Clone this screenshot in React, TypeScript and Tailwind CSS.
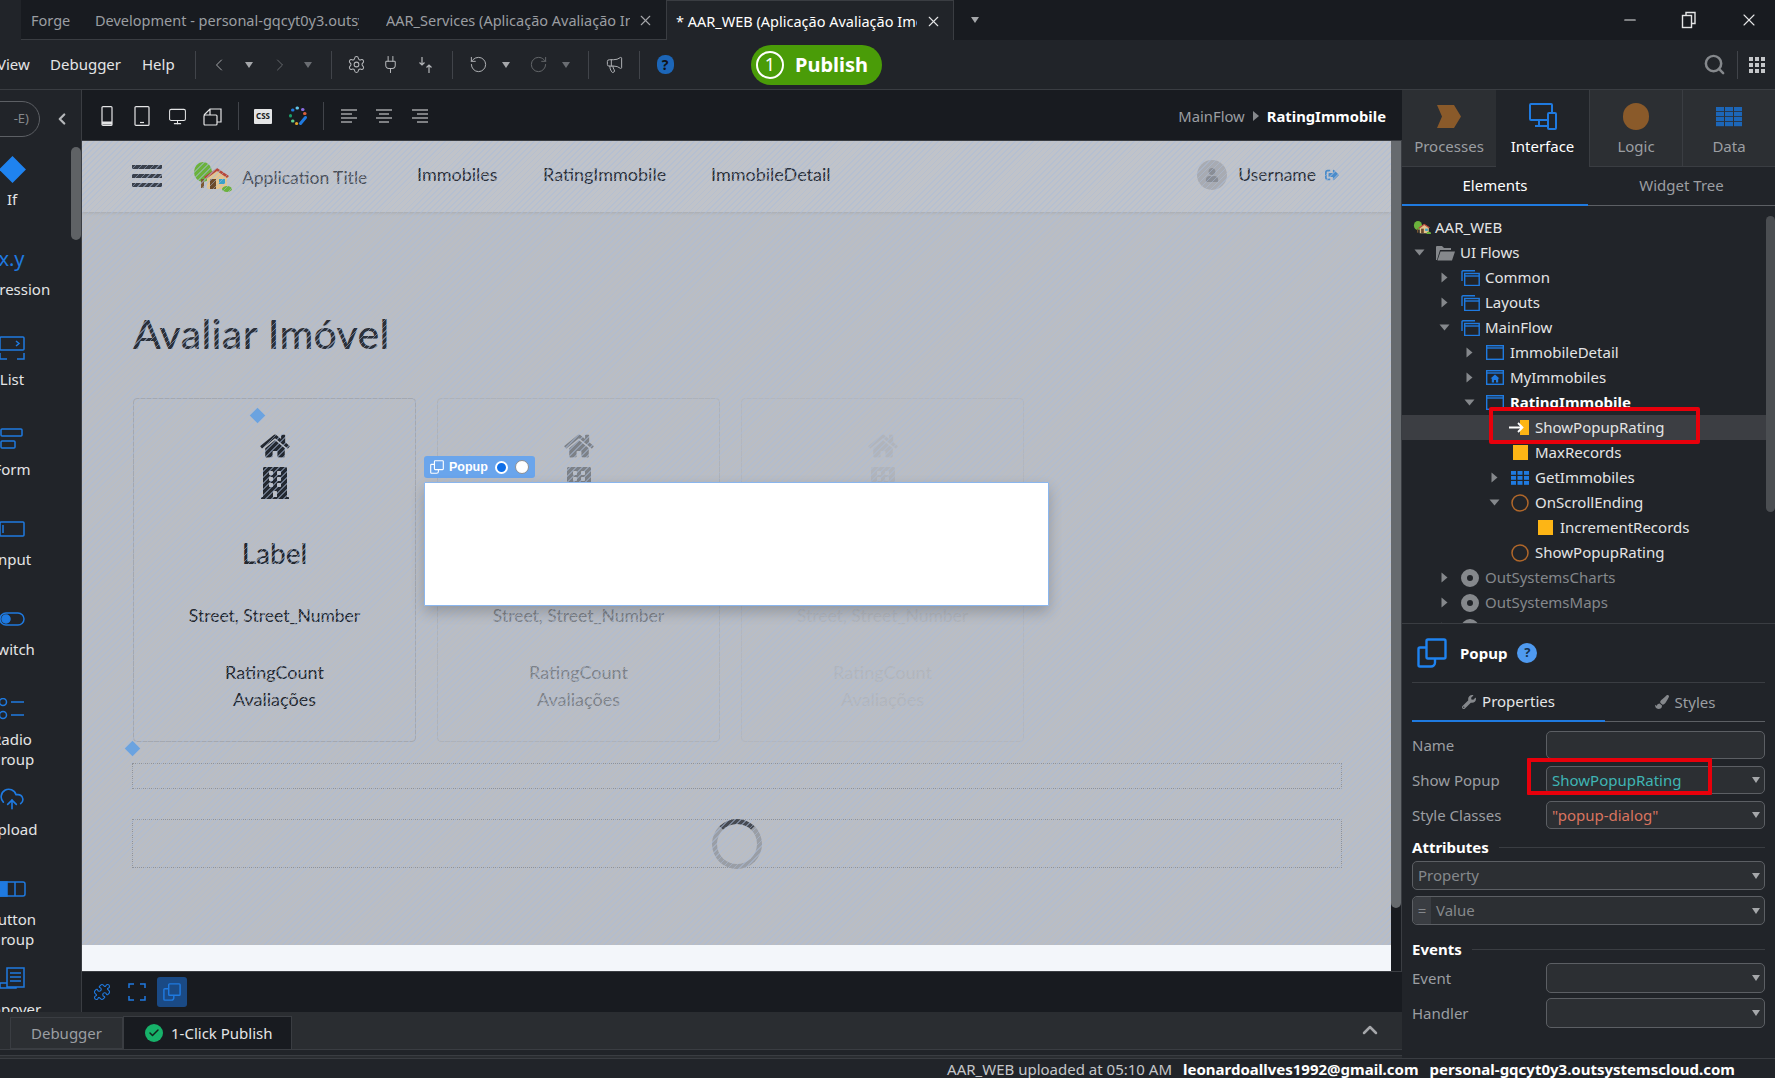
import React from "react";
import {
  ChevronLeft,
  ChevronRight,
  Search,
  Plug,
  Settings,
  RotateCcw,
  RotateCw,
  Megaphone,
  Monitor,
  Puzzle,
  X,
  Check,
  ChevronUp,
  Minus,
  CloudUpload,
} from "lucide-react";
import { FaHome, FaBuilding, FaWrench, FaPaintBrush, FaUser, FaSignOutAlt } from "react-icons/fa";

const Caret = ({ dim, className = "" }: { dim?: boolean; className?: string }) => (
  <svg width="10" height="8" viewBox="0 0 10 8" className={`${dim ? "text-[#6a6d72]" : "text-[#a5a7aa]"} ${className}`}>
    <path d="M1 1h8L5 7z" fill="currentColor" />
  </svg>
);

const Sep = ({ className }: { className: string }) => <div className={`h-7 w-px bg-[#41444a] ${className}`} />;

const Slot = ({ className, children }: { className: string; children: React.ReactNode }) => (
  <div className={`flex h-6 w-5 shrink-0 items-center justify-center ${className}`}>{children}</div>
);

const Logo = ({ size }: { size: number }) => (
  <svg width={size} height={size * 0.75} viewBox="0 0 40 30">
    <ellipse cx="11" cy="10" rx="9" ry="10" fill="#6bb23c" />
    <rect x="9" y="17" width="3" height="9" fill="#7c5a34" />
    <path d="M13 15 L25 7 L37 15 L35 16 L35 27 L15 27 L15 16z" fill="#e3c48f" />
    <path d="M12 15 L25 6 L37 14 L35 16 L25 9 L14 17z" fill="#b8473a" />
    <rect x="18" y="17" width="6" height="10" fill="#6b4a2b" />
    <rect x="27" y="17" width="6" height="5" fill="#3aa1c9" />
    <ellipse cx="35" cy="27" rx="5" ry="3" fill="#6bb23c" />
  </svg>
);

const PopupGlyph = ({ className, size = 18 }: { className: string; size?: number }) => (
  <svg width={size} height={size} viewBox="0 0 30 30" fill="none" stroke="currentColor" strokeWidth="2.4" className={className}>
    <rect x="9.5" y="1.5" width="19" height="19" rx="1.5" />
    <path d="M9.5 9.5H3a1.5 1.5 0 0 0-1.5 1.5v16A1.5 1.5 0 0 0 3 28.500h11a4 4 0 0 0 4-4v-4" />
  </svg>
);

const FlowIcon = () => (
  <svg width="19" height="16" viewBox="0 0 19 16" fill="none" stroke="#1f7ae0" strokeWidth="1.4">
    <path d="M1 11V1.700a1 1 0 0 1 1-1h12" />
    <rect x="3.700" y="3.500" width="14.500" height="12" />
    <path d="M3.700 6h14.500" />
  </svg>
);

const ScreenIcon = ({ home }: { home?: boolean }) => (
  <svg width="18" height="15" viewBox="0 0 18 15" fill="none" stroke="#1f7ae0" strokeWidth="1.4">
    <rect x="0.700" y="0.700" width="16.600" height="13.600" />
    <path d="M0.700 3h16.600" />
    {home && <path d="M9 4.500l4.500 4h-1.300v4H10V10H8v2.500H5.800v-4H4.500z" fill="#1f7ae0" stroke="none" />}
  </svg>
);

const OrangeCircle = () => (
  <svg width="18" height="18" viewBox="0 0 18 18" fill="none" stroke="#b0672a" strokeWidth="1.500">
    <circle cx="9" cy="9" r="8" />
  </svg>
);

const ModuleIcon = () => (
  <svg width="18" height="18" viewBox="0 0 18 18">
    <circle cx="9" cy="9" r="6" fill="none" stroke="#85888c" strokeWidth="6" />
  </svg>
);

const AggIcon = () => (
  <svg width="18" height="14" viewBox="0 0 18 14" fill="#1f7ae0">
    {[0, 5, 10].map((y) =>
      [0, 6.500, 13].map((x) => <rect key={`${x}-${y}`} x={x} y={y} width="5" height="3.800" />)
    )}
  </svg>
);

const treeIndent = ["pl-[10px]", "pl-[35px]", "pl-[60px]", "pl-[85px]", "pl-[110px]"];

const TreeRow = ({
  level,
  arrow,
  icon,
  text,
  bold,
  dim,
  selected,
}: {
  level: number;
  arrow?: "r" | "d";
  icon: React.ReactNode;
  text: string;
  bold?: boolean;
  dim?: boolean;
  selected?: boolean;
}) => (
  <div className={`flex h-[25px] items-center ${treeIndent[level]} ${selected ? "bg-[#3c3e43]" : ""}`}>
    <div className="flex w-[14px] justify-center">
      {arrow === "r" && (
        <svg width="7" height="11" viewBox="0 0 7 11">
          <path d="M0.500 0.500L6.500 5.500L0.500 10.500z" fill="#85888c" />
        </svg>
      )}
      {arrow === "d" && (
        <svg width="11" height="7" viewBox="0 0 11 7">
          <path d="M0.500 0.500H10.500L5.500 6.500z" fill="#85888c" />
        </svg>
      )}
    </div>
    <div className="ml-[8px] flex w-[22px] justify-center">{icon}</div>
    <span
      className={`ml-[4px] text-[15px] whitespace-nowrap ${bold ? "font-bold text-white" : dim ? "text-[#85888c]" : "text-[#e4e5e6]"}`}
    >
      {text}
    </span>
  </div>
);

const Square = () => <div className="h-[15px] w-[15px] bg-[#fdb515]" />;

const Box = ({ className, caret = true, children }: { className: string; caret?: boolean; children?: React.ReactNode }) => (
  <div className={`flex items-center rounded-[5px] border border-[#5c5f64] bg-[#2c2f33] pr-[3px] pl-[5px] ${className}`}>
    {children}
    {caret && <Caret className="ml-auto" />}
  </div>
);

const Field = ({
  label,
  text,
  color,
  caret = true,
  className,
}: {
  label: string;
  text?: string;
  color?: string;
  caret?: boolean;
  className: string;
}) => (
  <div className={`flex items-center ${className}`}>
    <span className="w-[134px] text-[15px] text-[#9b9ea2]">{label}</span>
    <Box className="h-[28px] flex-1" caret={caret}>
      {text && <span className={`text-[15px] ${color}`}>{text}</span>}
    </Box>
  </div>
);

const PaletteItem = ({ icon, lines }: { icon: React.ReactNode; lines: string[] }) => (
  <div className="flex h-[90px] w-[100px] flex-col items-center">
    <div className="flex h-8 items-center justify-center">{icon}</div>
    <div className="mt-1 text-center text-[15px] leading-[20px] text-[#e4e5e6]">
      {lines.map((l) => (
        <div key={l}>{l}</div>
      ))}
    </div>
  </div>
);

const Card = ({ className, border }: { className: string; border: string }) => (
  <div className={`h-[344px] w-[283px] rounded-[4px] border ${border}`}>
    <div className={`flex flex-col items-center pt-[34px] font-['Lato',sans-serif] text-[#232830] ${className}`}>
      <FaHome className="h-[26px] w-[32px]" />
      <FaBuilding className="mt-[7px] h-[34px] w-[28px]" />
      <div className="mt-[35px] text-[28px] leading-[36px] font-medium">Label</div>
      <div className="mt-[32px] text-[17.500px] leading-[26px]">Street, Street_Number</div>
      <div className="mt-[30px] text-[18px] leading-[27px]">RatingCount</div>
      <div className="text-[18px] leading-[27px]">Avaliações</div>
    </div>
  </div>
);

const App = () => {
  return (
    <div className="flex h-[1078px] w-[1775px] flex-col overflow-hidden bg-[#181b20] font-['Noto_Sans',sans-serif] text-[15px]">
      {/* title bar */}
      <div className="flex h-[40px] shrink-0 items-stretch bg-[#181b20] text-[14.500px] text-[#9b9ea2]">
        <div className="w-[21px] bg-[#212429]" />
        <div className="flex w-[645px] items-center border-b border-[#3a3d42] pt-[2px]">
          <span className="ml-[10px] w-[64px]">Forge</span>
          <span className="w-[264px] overflow-hidden whitespace-nowrap">Development - personal-gqcyt0y3.outsystemscloud.com</span>
          <span className="ml-[27px] w-[244px] overflow-hidden whitespace-nowrap">AAR_Services (Aplicação Avaliação Imóveis)</span>
          <X className="ml-[7px] h-[17px] w-[17px] text-[#a5a7aa]" strokeWidth={1.500} />
        </div>
        <div className="flex w-[288px] items-center border-t border-r border-l border-[#3a3d42] bg-[#212429] pt-[2px] pl-[9px] text-white">
          <span className="w-[241px] overflow-hidden whitespace-nowrap">* AAR_WEB (Aplicação Avaliação Imóveis)</span>
          <X className="ml-[8px] h-[17px] w-[17px] text-[#e4e5e6]" strokeWidth={1.500} />
        </div>
        <div className="ml-[16px] flex items-center">
          <Caret />
        </div>
        <div className="ml-auto flex items-center text-[#e4e5e6]">
          <Minus className="h-[18px] w-[18px]" strokeWidth={1.500} />
          <svg width="16" height="18" viewBox="0 0 16 18" fill="none" stroke="currentColor" strokeWidth="1.400" className="ml-[42px]">
            <rect x="1.500" y="4.500" width="9" height="12" />
            <path d="M5 4.500V1.500h9v11h-3.500" />
          </svg>
          <X className="mr-[16px] ml-[42px] h-[20px] w-[20px]" strokeWidth={1.300} />
        </div>
      </div>

      {/* main toolbar */}
      <div className="flex h-[50px] shrink-0 items-center border-b border-[#3a3d42] bg-[#212429] text-[#e4e5e6]">
        <span className="-ml-[3px] w-[33px]">View</span>
        <span className="ml-[20px] w-[71px]">Debugger</span>
        <span className="ml-[21px] w-[31px]">Help</span>
        <Sep className="ml-[22px]" />
        <Slot className="ml-[13px]">
          <ChevronLeft className="h-[20px] w-[20px] text-[#a5a7aa]" strokeWidth={1.200} />
        </Slot>
        <Slot className="ml-[10px]">
          <Caret />
        </Slot>
        <Slot className="ml-[11px]">
          <ChevronRight className="h-[20px] w-[20px] text-[#66696d]" strokeWidth={1.200} />
        </Slot>
        <Slot className="ml-[8px]">
          <Caret dim />
        </Slot>
        <Sep className="ml-[13px]" />
        <Slot className="ml-[14px]">
          <Settings className="h-[19px] w-[19px] text-[#b5b7ba]" strokeWidth={1.300} />
        </Slot>
        <Slot className="ml-[14px]">
          <Plug className="h-[19px] w-[19px] text-[#b5b7ba]" strokeWidth={1.300} />
        </Slot>
        <Slot className="ml-[16px]">
          <svg width="18" height="18" viewBox="0 0 18 18" fill="none" stroke="#b5b7ba" strokeWidth="1.200">
            <path d="M5 1v8M2.500 6.500L5 9l2.500-2.500M12 17V9M9.500 11.500L12 9l2.500 2.500" />
          </svg>
        </Slot>
        <Sep className="ml-[16px]" />
        <Slot className="ml-[15px]">
          <RotateCcw className="h-[19px] w-[19px] text-[#b5b7ba]" strokeWidth={1.200} />
        </Slot>
        <Slot className="ml-[8px]">
          <Caret />
        </Slot>
        <Slot className="ml-[12px]">
          <RotateCw className="h-[19px] w-[19px] text-[#66696d]" strokeWidth={1.200} />
        </Slot>
        <Slot className="ml-[8px]">
          <Caret dim />
        </Slot>
        <Sep className="ml-[12px]" />
        <Slot className="ml-[15px]">
          <Megaphone className="h-[19px] w-[19px] text-[#b5b7ba]" strokeWidth={1.200} />
        </Slot>
        <Sep className="ml-[15px]" />
        <Slot className="ml-[15px]">
          <div className="flex h-[19px] w-[17px] items-center justify-center rounded-[8px] bg-[#1c66b8] text-[14px] font-bold text-[#101317]">?</div>
        </Slot>
        <div className="ml-[76px] flex h-[40px] w-[131px] items-center rounded-full bg-[#4a9c08] pl-[5px] text-[20px] font-bold text-white">
          <div className="flex h-[28px] w-[28px] items-center justify-center rounded-full border-2 border-white text-[18px] font-normal">1</div>
          <span className="ml-[11px]">Publish</span>
        </div>
        <div className="ml-auto flex items-center">
          <Search className="h-[23px] w-[23px] text-[#85888c]" strokeWidth={2.600} />
          <div className="mr-[11px] ml-[11px] h-7 w-px bg-[#41444a]" />
          <div className="mr-[10px] grid grid-cols-3 gap-[2px]">
            {Array.from({ length: 9 }).map((_, i) => (
              <div key={i} className="h-[4px] w-[4px] bg-[#c5c7ca]" />
            ))}
          </div>
        </div>
      </div>

      {/* body */}
      <div className="flex h-[968px] shrink-0">
        <div className="flex w-[1402px] flex-col">
          <div className="flex h-[922px]">
            {/* palette */}
            <div className="flex w-[82px] shrink-0 overflow-hidden border-r border-[#3a3d42] bg-[#212429]">
              <div className="w-[71px] overflow-hidden">
                <div className="mt-[10px] flex h-[37px] items-center">
                  <div className="-ml-[30px] flex h-[36px] w-[70px] items-center justify-end rounded-full border border-[#5c5f64] pr-[10px] text-[13px] text-[#85888c]">
                    -E)
                  </div>
                  <ChevronLeft className="ml-[13px] h-[18px] w-[18px] text-[#b5b7ba]" strokeWidth={3} />
                </div>
                <div className="-ml-[38px] pt-[16px]">
                  <PaletteItem
                    icon={
                      <div className="flex h-[32px] items-center">
                        <div className="h-[19px] w-[19px] rotate-45 bg-[#1f83f0]" />
                      </div>
                    }
                    lines={["If"]}
                  />
                  <PaletteItem
                    icon={<span className="-ml-[1px] text-[20px] text-[#1f7ae0]">x.y</span>}
                    lines={["Expression"]}
                  />
                  <PaletteItem
                    icon={
                      <svg width="26" height="26" viewBox="0 0 26 26" fill="none" stroke="#1f7ae0" strokeWidth="1.500">
                        <rect x="1" y="1" width="24" height="13" rx="1" />
                        <path d="M17 5l3 2.500-3 2.500M1 17v6h7M25 17v6h-7" />
                      </svg>
                    }
                    lines={["List"]}
                  />
                  <PaletteItem
                    icon={
                      <svg width="24" height="24" viewBox="0 0 24 24" fill="none" stroke="#1f7ae0" strokeWidth="1.500">
                        <rect x="1" y="2" width="21" height="7" rx="1" />
                        <rect x="1" y="14" width="14" height="7" rx="1" />
                      </svg>
                    }
                    lines={["Form"]}
                  />
                  <PaletteItem
                    icon={
                      <svg width="26" height="16" viewBox="0 0 26 16" fill="none" stroke="#1f7ae0" strokeWidth="1.500">
                        <rect x="1" y="1" width="24" height="14" rx="1" />
                        <path d="M4 4v8" />
                      </svg>
                    }
                    lines={["Input"]}
                  />
                  <PaletteItem
                    icon={
                      <svg width="26" height="14" viewBox="0 0 26 14" fill="none" stroke="#1f7ae0" strokeWidth="1.500">
                        <rect x="1" y="1" width="24" height="12" rx="6" />
                        <circle cx="7" cy="7" r="4" fill="#1f7ae0" />
                      </svg>
                    }
                    lines={["Switch"]}
                  />
                  <PaletteItem
                    icon={
                      <svg width="26" height="22" viewBox="0 0 26 22" fill="none" stroke="#1f7ae0" strokeWidth="1.500">
                        <circle cx="4" cy="4" r="3.500" />
                        <circle cx="4" cy="17" r="3.500" />
                        <path d="M12 4h13M12 17h13" />
                      </svg>
                    }
                    lines={["Radio", "Group"]}
                  />
                  <PaletteItem icon={<CloudUpload className="h-[26px] w-[26px] text-[#1f7ae0]" strokeWidth={1.500} />} lines={["Upload"]} />
                  <PaletteItem
                    icon={
                      <svg width="28" height="16" viewBox="0 0 28 16" fill="none" stroke="#1f7ae0" strokeWidth="1.500">
                        <rect x="1" y="1" width="26" height="14" rx="2" />
                        <rect x="1" y="1" width="8" height="14" fill="#1f7ae0" />
                        <path d="M17 1v14" />
                      </svg>
                    }
                    lines={["Button", "Group"]}
                  />
                  <PaletteItem
                    icon={
                      <svg width="26" height="24" viewBox="0 0 26 24" fill="none" stroke="#1f7ae0" strokeWidth="1.500">
                        <rect x="8" y="1" width="17" height="19" />
                        <path d="M11 6h11M11 10h11M11 14h11M8 16H1v5h16v-1" />
                      </svg>
                    }
                    lines={["Popover"]}
                  />
                </div>
              </div>
              <div className="mt-[57px] h-[93px] w-[10px] rounded-full bg-[#5f6265]" />
            </div>

            {/* center */}
            <div className="flex w-[1320px] flex-col">
              <div className="flex h-[51px] shrink-0 items-center border-b border-[#3a3d42] bg-[#181b20] pt-[2px] text-[#e4e5e6]">
                <Slot className="ml-[15px]">
                  <svg width="12" height="20" viewBox="0 0 12 20" fill="none" stroke="currentColor" strokeWidth="1.200">
                    <rect x="1" y="0.600" width="10" height="18.800" rx="1" />
                    <path d="M1 17h10" strokeWidth="3" />
                  </svg>
                </Slot>
                <Slot className="ml-[15px]">
                  <svg width="16" height="20" viewBox="0 0 16 20" fill="none" stroke="currentColor" strokeWidth="1.200">
                    <rect x="1" y="0.600" width="14" height="18.800" rx="1" />
                    <path d="M6 16.500h4" />
                  </svg>
                </Slot>
                <Slot className="ml-[15px]">
                  <Monitor className="h-[19px] w-[19px]" strokeWidth={1.300} />
                </Slot>
                <Slot className="ml-[15px]">
                  <svg width="19" height="19" viewBox="0 0 19 19" fill="none" stroke="currentColor" strokeWidth="1.200">
                    <rect x="1" y="8" width="13" height="10" rx="1" />
                    <path d="M1 8l6-6h11v13h-4M7 2v6" />
                  </svg>
                </Slot>
                <Sep className="ml-[16px]" />
                <Slot className="ml-[14px]">
                  <div className="flex h-[15px] w-[18px] items-center justify-center rounded-[1px] bg-[#e4e5e6] text-[8px] font-bold text-[#181b20]">CSS</div>
                </Slot>
                <Slot className="ml-[15px]">
                  <svg width="20" height="20" viewBox="0 0 20 20" fill="none" strokeWidth="3" strokeLinecap="round">
                    <path d="M9 2h.5" stroke="#62c6ea" />
                    <path d="M14.500 3.500h.5" stroke="#8a6be0" />
                    <path d="M4.500 4h.5" stroke="#1f7ae0" />
                    <path d="M2.500 9.500v.5" stroke="#1a9e6a" />
                    <path d="M4.500 15h.5" stroke="#5fd08f" />
                    <path d="M8.500 17.500h.2" stroke="#e0a52a" />
                    <path d="M12.500 17.500l5-6" stroke="#1f7ae0" />
                    <path d="M16.500 7.500h.5" stroke="#d9603a" />
                  </svg>
                </Slot>
                <Sep className="ml-[15px]" />
                <Slot className="ml-[15px]">
                  <svg width="16" height="14" viewBox="0 0 16 14" fill="none" stroke="currentColor" strokeWidth="1.200">
                    <path d="M0 1h16M0 5h11M0 9h16M0 13h11" />
                  </svg>
                </Slot>
                <Slot className="ml-[15px]">
                  <svg width="16" height="14" viewBox="0 0 16 14" fill="none" stroke="currentColor" strokeWidth="1.200">
                    <path d="M0 1h16M3 5h10M0 9h16M3 13h10" />
                  </svg>
                </Slot>
                <Slot className="ml-[16px]">
                  <svg width="16" height="14" viewBox="0 0 16 14" fill="none" stroke="currentColor" strokeWidth="1.200">
                    <path d="M0 1h16M5 5h11M0 9h16M5 13h11" />
                  </svg>
                </Slot>
                <div className="mr-[16px] ml-auto flex items-center text-[14.800px]">
                  <span className="text-[#9b9ea2]">MainFlow</span>
                  <svg width="6" height="10" viewBox="0 0 6 10" className="mx-[8px]">
                    <path d="M0 0l6 5-6 5z" fill="#85888c" />
                  </svg>
                  <span className="font-bold text-white">RatingImmobile</span>
                </div>
              </div>

              <div className="flex h-[830px]">
                <div className="relative w-[1309px] shrink-0 bg-[#f3f6fa]">
                  <div className="relative h-[804px] overflow-hidden bg-[#babdc3] font-['Lato',sans-serif] text-[#2b3039]">
                    <div className="flex h-[71px] items-center bg-[#c0c3c9] text-[18px] shadow-[0_1px_3px_rgba(0,0,0,0.1)]">
                      <div className="mb-[2px] ml-[50px] flex flex-col gap-[5px]">
                        <div className="h-[4px] w-[30px] bg-[#3b414c]" />
                        <div className="h-[4px] w-[30px] bg-[#3b414c]" />
                        <div className="h-[4px] w-[30px] bg-[#3b414c]" />
                      </div>
                      <div className="ml-[30px]">
                        <Logo size={40} />
                      </div>
                      <span className="mt-[3px] ml-[10px] w-[125px] text-[17.500px] whitespace-nowrap text-[#4a4f58]">Application Title</span>
                      <div className="mb-[4px] flex items-center">
                        <span className="ml-[50px] w-[81px]">Immobiles</span>
                        <span className="ml-[45px] w-[123px]">RatingImmobile</span>
                        <span className="ml-[45px] w-[118px]">ImmobileDetail</span>
                      </div>
                      <div className="mb-[3px] ml-auto flex items-center pr-[52px]">
                        <div className="flex h-[30px] w-[30px] items-center justify-center rounded-full bg-[#a8abb2]">
                          <FaUser className="h-[14px] w-[14px] text-[#898d95]" />
                        </div>
                        <span className="ml-[11px] text-[17.500px]">Username</span>
                        <FaSignOutAlt className="ml-[9px] h-[14px] w-[14px] text-[#4a8cca]" />
                      </div>
                    </div>
                    <div className="pl-[51px]">
                      <h1 className="pt-[100px] pb-[1px] text-[41px] leading-[44px] font-medium tracking-[0.3px]">Avaliar Imóvel</h1>
                      <div className="mt-[41px] flex gap-[21px]">
                        <Card className="" border="border-[#a4a8b0]" />
                        <Card className="opacity-40" border="border-[#aeb2b9]" />
                        <Card className="opacity-5" border="border-[#b3b6bd]" />
                      </div>
                      <div className="mt-[21px] -ml-px h-[26px] w-[1210px] border border-dotted border-[#8f9299]" />
                      <div className="mt-[30px] -ml-px flex h-[49px] w-[1210px] items-center justify-center border border-dotted border-[#8f9299]">
                        <div className="h-[50px] w-[50px] rounded-full border-[5px] border-[#9a9ea5] border-t-[#464a52]" />
                      </div>
                    </div>
                    {/* stripes over the dimmed page */}
                    <div className="absolute inset-0 bg-[repeating-linear-gradient(135deg,rgba(170,188,218,0.5)_0px,rgba(170,188,218,0.5)_1.200px,transparent_1.200px,transparent_4.200px)]" />
                    <div className="absolute top-[602px] left-[45px] h-[11px] w-[11px] rotate-45 bg-[#6ba3e0]" />
                    <div className="absolute top-[269px] left-[170px] h-[11px] w-[11px] rotate-45 bg-[#6ba3e0]" />
                  </div>
                  {/* popup widget */}
                  <div className="absolute top-[315px] left-[342px] flex h-[22px] w-[111px] items-center rounded-[3px] bg-[#6aa5ec] pl-[6px] font-['Liberation_Sans',sans-serif] text-[12.500px] font-bold text-white">
                    <PopupGlyph className="text-white" size={14} />
                    <span className="ml-[5px]">Popup</span>
                    <div className="ml-[7px] h-[13px] w-[13px] rounded-full border-2 border-white bg-[#0f6fe8]" />
                    <div className="ml-[7px] h-[14px] w-[14px] rounded-full border border-[#8c8f94] bg-white" />
                  </div>
                  <div className="absolute top-[341px] left-[342px] h-[124px] w-[625px] rounded-[1px] border border-[#8ab6ee] bg-white shadow-[0_6px_14px_rgba(0,0,0,0.2)]" />
                </div>
                <div className="flex w-[10px] shrink-0 flex-col bg-[#181b20]">
                  <div className="h-[767px] rounded-b-full bg-[#666a6e]" />
                </div>
                <div className="w-px bg-[#3a3d42]" />
              </div>

              <div className="flex h-[41px] shrink-0 items-center border-t border-[#3a3d42] bg-[#181b20] text-[#1f7ae0]">
                <Puzzle className="ml-[11px] h-[18px] w-[18px]" strokeWidth={1.500} />
                <svg width="18" height="18" viewBox="0 0 18 18" fill="none" stroke="currentColor" strokeWidth="1.500" className="ml-[17px]">
                  <path d="M1 5V1h5M12 1h5v4M17 13v4h-5M6 17H1v-4" />
                </svg>
                <div className="ml-[11px] flex h-[30px] w-[30px] items-center justify-center rounded-[3px] bg-[#1a4a85]">
                  <PopupGlyph className="text-[#1f7ae0]" />
                </div>
              </div>
            </div>
          </div>

          {/* bottom tabs */}
          <div className="flex h-[46px] shrink-0 flex-col bg-[#2a2d31]">
            <div className="flex h-[38px] items-end border-b border-[#3a3d42] pl-[10px]">
              <div className="flex h-[32px] w-[113px] items-center justify-center border border-[#3a3d42] bg-[#2c2f33] text-[#9b9ea2]">Debugger</div>
              <div className="flex h-[33px] w-[169px] items-center border border-b-0 border-[#3a3d42] bg-[#181b20] pl-[21px] text-[#e4e5e6]">
                <div className="flex h-[18px] w-[18px] items-center justify-center rounded-full bg-[#17b26a]">
                  <Check className="h-[12px] w-[12px] text-[#12241c]" strokeWidth={3} />
                </div>
                <span className="ml-[8px]">1-Click Publish</span>
              </div>
              <ChevronUp className="mr-[20px] mb-[1px] ml-auto h-[24px] w-[24px] self-center text-[#a5a7aa]" strokeWidth={2.500} />
            </div>
            <div className="h-[6px] border-b border-[#3a3d42] bg-[#212429]" />
          </div>
        </div>

        {/* right panel */}
        <div className="flex w-[373px] flex-col bg-[#212429]">
          <div className="flex h-[77px] shrink-0 text-[15px] text-[#9b9ea2]">
            <div className="flex w-[94px] flex-col items-center border-b border-[#3a3d42] bg-[#2c2f33] pt-[13px]">
              <div className="flex h-[27px] items-center">
                <svg width="26" height="23" viewBox="0 0 26 23">
                  <path d="M1 0h17l7 11.500-7 11.500H1l5-11.500z" fill="#8a5a2a" />
                </svg>
              </div>
              <span className="mt-[5px]">Processes</span>
            </div>
            <div className="flex w-[93px] flex-col items-center pt-[13px] text-white">
              <svg width="28" height="27" viewBox="0 0 28 27" fill="none" stroke="#1f7ae0" strokeWidth="2">
                <path d="M18 17H2a1 1 0 0 1-1-1V2a1 1 0 0 1 1-1h20a1 1 0 0 1 1 1v7" />
                <path d="M10 17v5M6 23h12" />
                <rect x="19" y="10" width="8" height="16" rx="1" />
              </svg>
              <span className="mt-[5px]">Interface</span>
            </div>
            <div className="flex w-[93px] flex-col items-center border-b border-l border-[#3a3d42] bg-[#2c2f33] pt-[13px]">
              <div className="h-[27px] w-[26px] rounded-full bg-[#8a5a2a]" />
              <span className="mt-[5px]">Logic</span>
            </div>
            <div className="flex w-[93px] flex-col items-center border-b border-l border-[#3a3d42] bg-[#2c2f33] pt-[13px]">
              <div className="flex h-[27px] items-center">
                <svg width="26" height="20" viewBox="0 0 26 20" fill="#1c66b8">
                  {[0, 5, 10, 15].map((y) =>
                    [0, 9, 18].map((x) => <rect key={`${x}-${y}`} x={x} y={y} width="8" height="4.200" />)
                  )}
                </svg>
              </div>
              <span className="mt-[5px]">Data</span>
            </div>
          </div>
          <div className="flex h-[39px] shrink-0 text-center leading-[36px]">
            <div className="w-[186px] border-b-2 border-[#1f7ae0] text-white">Elements</div>
            <div className="flex-1 border-b border-[#5c5f64] text-[#9b9ea2]">Widget Tree</div>
          </div>

          {/* tree */}
          <div className="relative flex h-[418px] shrink-0 overflow-hidden border-b border-[#3a3d42]">
            <div className="w-[364px] pt-[9px]">
              <div className="flex h-[25px] items-center pl-[9px]">
                <div className="flex w-[22px] justify-center">
                  <Logo size={18} />
                </div>
                <span className="ml-[2px] text-[#e4e5e6]">AAR_WEB</span>
              </div>
              <TreeRow
                level={0}
                arrow="d"
                text="UI Flows"
                icon={
                  <svg width="19" height="16" viewBox="0 0 19 16" fill="#85888c">
                    <path d="M0 15V2a1 1 0 0 1 1-1h5l2 2h7v2H4L1 15zM4.500 6.500H19l-3 9H1.500z" />
                  </svg>
                }
              />
              <TreeRow level={1} arrow="r" text="Common" icon={<FlowIcon />} />
              <TreeRow level={1} arrow="r" text="Layouts" icon={<FlowIcon />} />
              <TreeRow level={1} arrow="d" text="MainFlow" icon={<FlowIcon />} />
              <TreeRow level={2} arrow="r" text="ImmobileDetail" icon={<ScreenIcon />} />
              <TreeRow level={2} arrow="r" text="MyImmobiles" icon={<ScreenIcon home />} />
              <TreeRow level={2} arrow="d" text="RatingImmobile" bold icon={<ScreenIcon />} />
              <TreeRow
                level={3}
                selected
                text="ShowPopupRating"
                icon={
                  <div className="relative flex h-[15px] w-[18px] items-center">
                    <div className="absolute right-0 h-[15px] w-[9px] bg-[#fdb515]" />
                    <svg width="15" height="11" viewBox="0 0 15 11" fill="none" stroke="#fff" strokeWidth="1.800" className="relative -ml-[2px]">
                      <path d="M0 5.500h13M9 1l4.500 4.500L9 10" />
                    </svg>
                  </div>
                }
              />
              <TreeRow level={3} text="MaxRecords" icon={<Square />} />
              <TreeRow level={3} arrow="r" text="GetImmobiles" icon={<AggIcon />} />
              <TreeRow level={3} arrow="d" text="OnScrollEnding" icon={<OrangeCircle />} />
              <TreeRow level={4} text="IncrementRecords" icon={<Square />} />
              <TreeRow level={3} text="ShowPopupRating" icon={<OrangeCircle />} />
              <TreeRow level={1} arrow="r" dim text="OutSystemsCharts" icon={<ModuleIcon />} />
              <TreeRow level={1} arrow="r" dim text="OutSystemsMaps" icon={<ModuleIcon />} />
              <TreeRow level={1} arrow="r" dim text="OutSystemsUI" icon={<ModuleIcon />} />
            </div>
            <div className="mt-[10px] h-[296px] w-[9px] rounded-full bg-[#4b4e52]" />
            <div className="absolute top-[201px] left-[87px] h-[37px] w-[211px] rounded-[2px] border-[4px] border-[#e8000b]" />
          </div>

          {/* properties */}
          <div className="relative flex flex-1 flex-col px-[10px]">
            <div className="flex h-[59px] shrink-0 items-center border-b border-[#3a3d42] pl-[5px]">
              <PopupGlyph className="text-[#1f83f0]" size={30} />
              <span className="ml-[13px] font-bold text-white">Popup</span>
              <div className="ml-[10px] flex h-[20px] w-[20px] items-center justify-center rounded-full bg-[#4f9af0] text-[13px] font-bold text-[#13304f]">?</div>
            </div>
            <div className="flex h-[39px] shrink-0 text-center">
              <div className="flex w-[193px] items-center justify-center border-b-2 border-[#1f7ae0] text-[#e4e5e6]">
                <FaWrench className="h-[14px] w-[14px] text-[#85888c]" />
                <span className="ml-[6px]">Properties</span>
              </div>
              <div className="flex flex-1 items-center justify-center border-b border-[#5c5f64] text-[#9b9ea2]">
                <FaPaintBrush className="h-[14px] w-[14px] text-[#85888c]" />
                <span className="ml-[6px]">Styles</span>
              </div>
            </div>
            <Field className="mt-[9px]" label="Name" caret={false} />
            <Field className="mt-[7px]" label="Show Popup" text="ShowPopupRating" color="text-[#3fb5b5]" />
            <Field className="mt-[7px]" label="Style Classes" text={'"popup-dialog"'} color="text-[#d9745f]" />
            <div className="mt-[7px] flex h-[22px] items-center">
              <span className="font-bold text-white">Attributes</span>
              <div className="ml-[10px] h-px flex-1 bg-[#3a3d42]" />
            </div>
            <Box className="mt-[3px] h-[29px] shrink-0">
              <span className="text-[#85888c]">Property</span>
            </Box>
            <div className="mt-[6px] flex h-[29px] shrink-0 items-center justify-between rounded-[5px] border border-[#5c5f64] bg-[#2c2f33] pr-[3px]">
              <div className="flex h-full items-center">
                <div className="flex h-full w-[18px] items-center justify-center rounded-l-[5px] bg-[#3a3d42] text-[#85888c]">=</div>
                <span className="ml-[5px] text-[#85888c]">Value</span>
              </div>
              <Caret />
            </div>
            <div className="mt-[13px] flex h-[22px] items-center">
              <span className="font-bold text-white">Events</span>
              <div className="ml-[10px] h-px flex-1 bg-[#3a3d42]" />
            </div>
            <div className="mt-[3px] flex items-center">
              <span className="w-[134px] text-[#9b9ea2]">Event</span>
              <Box className="h-[30px] flex-1" />
            </div>
            <div className="mt-[5px] flex items-center">
              <span className="w-[134px] text-[#9b9ea2]">Handler</span>
              <Box className="h-[30px] flex-1" />
            </div>
            <div className="absolute top-[134px] left-[125px] h-[37px] w-[185px] rounded-[1px] border-[4px] border-[#e8000b]" />
          </div>
        </div>
      </div>

      {/* status bar */}
      <div className="flex h-[20px] shrink-0 items-center justify-end border-t border-[#3a3d42] bg-[#212429] pr-[40px] text-[15px] leading-[20px] text-[#c5c7ca]">
        <span>AAR_WEB uploaded at 05:10 AM</span>
        <span className="ml-[11px] font-bold text-white">leonardoallves1992@gmail.com</span>
        <span className="ml-[11px] font-bold text-white">personal-gqcyt0y3.outsystemscloud.com</span>
      </div>
    </div>
  );
};

export default App;
